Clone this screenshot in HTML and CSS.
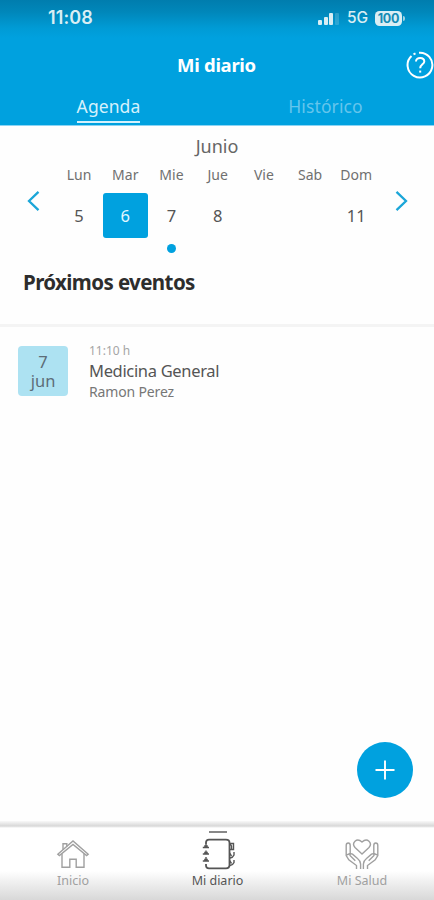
FILE: index.html
```html
<!DOCTYPE html>
<html lang="es">
<head>
  <meta charset="UTF-8">
  <meta name="viewport" content="width=device-width, initial-scale=1">
  <title>Mi diario</title>
  <link rel="stylesheet" href="styles.css">
</head>
<body>
  <header>
    <div class="status">
      <span class="time">11:08</span>
      <div class="signal"><i></i><i></i><i></i><i></i></div>
      <span class="net">5G</span>
      <span class="battery">100</span>
      <i class="battery-tip"></i>
    </div>
    <div class="title">
      <h1>Mi diario</h1>
      <svg class="help" width="28" height="28" viewBox="0 0 28 28">
        <path d="M13 1.7A12.4 12.4 0 1 1 5.5 5M7.5 3.4L9.5 2.4"/>
        <path d="M10 10.5C10 5.6 18.3 5.8 18.3 10.4C18.3 13.4 14.2 13.4 14.2 17.2"/>
        <path d="M14.2 19.6V21.6"/>
      </svg>
    </div>
    <nav class="tabs">
      <a class="active"><span>Agenda</span></a>
      <a><span>Histórico</span></a>
    </nav>
  </header>

  <main>
    <section class="calendar">
      <h2>Junio</h2>
      <div class="week">
        <svg class="arrow" width="14" height="22" viewBox="0 0 14 22"><path d="M11.5 1.8L2 11L11.5 20.2"/></svg>
        <div class="days">
          <div class="day"><span>Lun</span><b>5</b></div>
          <div class="day selected"><span>Mar</span><b>6</b></div>
          <div class="day event-day"><span>Mie</span><b>7</b></div>
          <div class="day"><span>Jue</span><b>8</b></div>
          <div class="day"><span>Vie</span><b></b></div>
          <div class="day"><span>Sab</span><b></b></div>
          <div class="day"><span>Dom</span><b>11</b></div>
        </div>
        <svg class="arrow" width="14" height="22" viewBox="0 0 14 22"><path d="M2.5 1.8L12 11L2.5 20.2"/></svg>
      </div>
    </section>

    <h3>Próximos eventos</h3>

    <article class="event">
      <div class="date"><span>7</span><span>jun</span></div>
      <div class="info">
        <p class="hour">11:10 h</p>
        <p class="name">Medicina General</p>
        <p class="doctor">Ramon Perez</p>
      </div>
    </article>

    <button class="add">
      <svg width="20" height="20" viewBox="0 0 20 20"><path d="M10 .5V19.5M.5 10H19.5"/></svg>
    </button>
  </main>

  <footer>
    <a class="home">
      <svg width="34" height="32" viewBox="0 0 34 32">
        <path d="M1.8 16.2L17 3L32.2 16.2L30.6 17.6L17 6.4L3.4 17.6Z"/>
        <path d="M6 15.5V29.3H13.8V21.2H20.2V29.3H28V15.5M7 11.7V5.8H10.8V8.4"/>
      </svg>
      <span>Inicio</span>
    </a>
    <a class="active diary">
      <svg width="34" height="32" viewBox="0 0 34 32">
        <path class="thick" d="M5 6V4.5Q5 1.7 8 1.7H25Q28.5 1.7 28.5 5V27Q28.5 30.3 25 30.3H8Q5 30.3 5 27.5V26"/>
        <path d="M1.8 9.5H8M3.2 8H6.8M1.8 16H8M3.2 14.5H6.8M1.8 23H8M3.2 21.5H6.8M5 6V9M5 12.5V15.5M5 19V22"/>
        <path d="M28.5 5.5H32.5V11.5H28.5M29 6L30.5 8V11M33 14V17Q32 19.5 29 20M28.5 15L30.5 18M33 22V24.5Q32 27 29 27.5M28.5 22.5L30.5 25.5"/>
      </svg>
      <span>Mi diario</span>
    </a>
    <a class="health">
      <svg width="36" height="32" viewBox="0 0 36 32">
        <path d="M18 16L11 9.5C7.2 5.2 12.5-.8 18 4C23.5-.8 28.8 5.2 25 9.5Z"/>
        <path d="M12.5 31V27.5L4.8 21.8L2.2 17.5V7.5Q2.2 5 4.2 5Q6.2 5 6.2 7.5V15.5M16.6 31V26Q16.2 22.5 13.5 20.5L8.5 16.2Q6 14.8 6 17.5L11.3 22.7M2.2 17.2L6.2 15.5"/>
        <path d="M23.5 31V27.5L31.2 21.8L33.8 17.5V7.5Q33.8 5 31.8 5Q29.8 5 29.8 7.5V15.5M19.4 31V26Q19.8 22.5 22.5 20.5L27.5 16.2Q30 14.8 30 17.5L24.7 22.7M33.8 17.2L29.8 15.5"/>
      </svg>
      <span>Mi Salud</span>
    </a>
  </footer>
</body>
</html>
```
FILE: styles.css
```css
* { margin:0; padding:0; box-sizing:border-box; }
body { font-family:"Noto Sans",sans-serif; background:#fefefe; color:#555; height:900px;
       display:flex; flex-direction:column; overflow:hidden; }
svg { fill:none; stroke:currentColor; flex:none; }

header { height:126px; color:#fff; border-bottom:1px solid #8bd4f4;
         background:linear-gradient(#007dae 0,#0087ba 12px,#009bd5 28px,#00a1df 38px); }
.status { height:36px; padding-left:48px; display:flex; align-items:center; color:#d9eef4; }
.time { font:600 18px/36px Inter,sans-serif; letter-spacing:.1px; width:270px; }
.signal { display:flex; align-items:flex-end; gap:1.5px; height:12px; width:22px; margin-top:2px; }
.signal i { width:4px; height:5px; border-radius:1px; background:#d9eef4; }
.signal i:nth-child(2) { height:8px; }
.signal i:nth-child(3) { height:12px; }
.signal i:nth-child(4) { height:12px; opacity:.2; }
.net { font:500 15.5px/36px Inter,sans-serif; margin-left:7px; width:28px; }
.battery { width:27px; height:15px; border-radius:4.5px; background:#d9eef4; color:#148bb5; text-align:center;
           font:bold 12.5px/15px Inter,sans-serif; letter-spacing:-.2px; }
.battery-tip { width:2px; height:5px; margin-left:1px; border-radius:0 2px 2px 0; background:#9fd2e3; }
.title { height:58px; padding-left:27px; display:flex; align-items:center; }
.title h1 { width:380px; font-size:18.5px; line-height:58px; letter-spacing:-.3px; text-align:center; }
.help { stroke-width:2; }
.tabs { display:flex; }
.tabs a { width:50%; text-align:center; color:#65c5ec; font-size:17.5px; line-height:24px; letter-spacing:.1px; }
.tabs span { display:inline-block; height:29px; }
.tabs .active { color:#d5f1fc; }
.tabs .active span { border-bottom:2px solid #d5f1fc; }

main { flex:1; display:flex; flex-direction:column; }
.calendar { padding-top:8px; }
.calendar h2 { font-size:18px; line-height:24px; font-weight:normal; text-align:center; color:#666; }
.week { display:flex; padding:6px 0 0 27px; height:95px; }
.arrow { color:#1ba6d8; stroke-width:2.3; margin-top:26px; }
.days { display:grid; grid-template-columns:repeat(7,46.2px); margin:0 14.5px 0 15px; }
.day { display:flex; flex-direction:column; align-items:center; color:#707070; }
.day span { font-size:14px; line-height:22px; height:29px; }
.day b { width:45px; height:45px; border-radius:3px; font-size:16.5px; font-weight:normal; line-height:45px;
         text-align:center; color:#555; }
.selected b { background:#00a1df; color:#e3f7ff; }
.event-day::after { content:""; width:9px; height:9px; margin-top:6px; border-radius:50%; background:#00a1df; }
h3 { height:71px; padding-left:23px; font-size:20.5px; line-height:28px; padding-top:15px;
     letter-spacing:-.6px; color:#2d2d2d; }
.event { display:flex; border-top:3px solid #f4f4f4; padding:19px 18px; gap:21px; }
.date { width:50px; height:50px; padding-top:6px; border-radius:4px; background:#ade2f2; color:#5d6d78;
        display:flex; flex-direction:column; align-items:center; font-size:16.5px; line-height:19px; }
.hour { font-size:12px; line-height:14px; margin-top:-2px; color:#a5a5a5; }
.name { font-size:16.5px; line-height:26px; letter-spacing:-.33px; }
.doctor { font-size:14px; line-height:16px; letter-spacing:-.15px; color:#777; }
.add { width:56px; height:56px; border:0; border-radius:50%; background:#00a1df; color:#fff;
       display:flex; align-items:center; justify-content:center; margin:auto 21px 23px auto; }
.add svg { stroke-width:1.9; }

footer { height:79px; display:flex; justify-content:space-between; padding:17px 38px 0 39px;
         background:linear-gradient(#f8f8f8,#d8d8d8 5px,#fff 7px,#fff 50px,#f1f1f1 60px,#d8d8d8 79px); }
footer a { width:68px; display:flex; flex-direction:column; align-items:center; color:#a0a0a0; }
footer span { font-size:12.5px; line-height:18px; margin-top:2px; white-space:nowrap; }
footer svg { stroke-width:1.4; }
footer .thick { stroke-width:1.8; }
footer .active { color:#555; }
.diary::before { content:""; width:18px; height:2px; margin:-7px 0 5px; background:#888; }
```
